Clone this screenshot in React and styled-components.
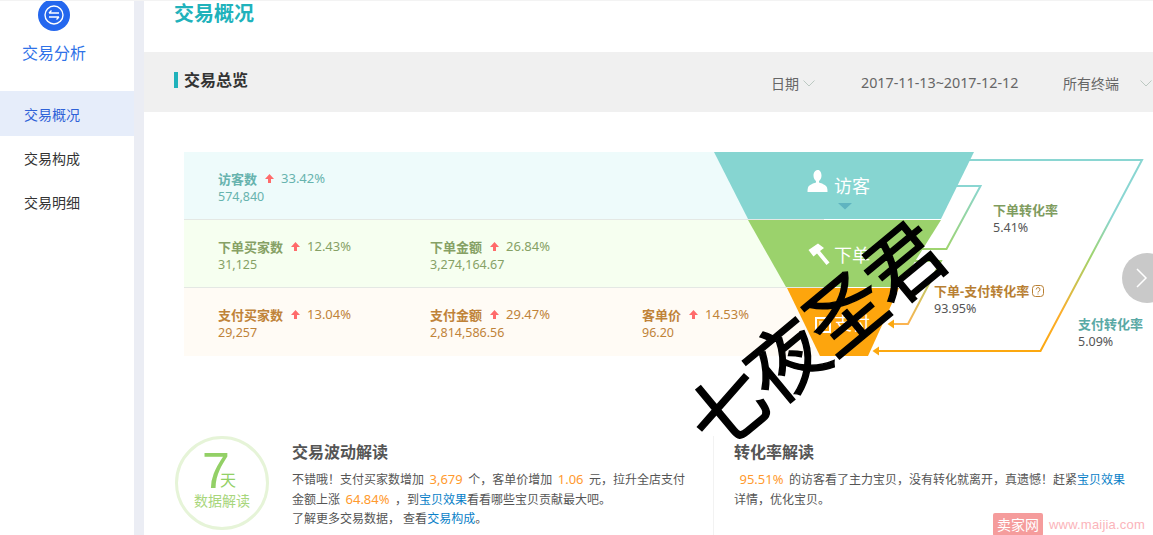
import React from 'react';
import styled, { createGlobalStyle } from 'styled-components';

const Global = createGlobalStyle`
  html, body { margin: 0; padding: 0; background: #fff; }
  body { width: 1153px; height: 535px; overflow: hidden; font-family: "Noto Sans", "Noto Sans CJK SC", sans-serif; }
  * { box-sizing: border-box; }
`;

const Page = styled.div`
  position: relative; display: flex; width: 1153px; height: 535px; overflow: hidden;
  border-top: 1px solid #f3f3f3; background: #fff;
`;
const Sidebar = styled.aside`
  width: 134px; flex: none; display: flex; flex-direction: column; background: #fff;
`;
const LogoWrap = styled.div`
  margin: -2px 0 0 38px; height: 32px; width: 32px;
`;
const SideTitle = styled.div`
  margin-top: 11px; width: 108px; text-align: center; font-size: 16px; line-height: 22px; color: #2f72e8;
`;
const Nav = styled.nav`
  margin-top: 27px; display: flex; flex-direction: column;
`;
const NavItem = styled.div`
  height: ${p => (p.$active ? 45 : 44)}px; padding-left: 24px; display: flex; align-items: center;
  font-size: 14px; color: ${p => (p.$active ? '#2f62d8' : '#333')};
  background: ${p => (p.$active ? '#e6edfa' : 'transparent')};
`;
const Gutter = styled.div`
  width: 10px; flex: none; background: #ebedf4;
`;
const Main = styled.main`
  flex: 1; min-width: 0; background: #fff;
`;
const PageTitle = styled.h1`
  margin: 0; height: 51px; padding: 0 0 0 30px; font-size: 20px; line-height: 26px; font-weight: 700; color: #20b2bb;
`;
const HeaderBar = styled.div`
  height: 60px; background: #f0f0f0; display: flex; align-items: center; padding-left: 30px;
`;
const SectionTitle = styled.h2`
  margin: -4px 0 0; width: 597px; border-left: 4px solid #20b2bb; padding-left: 6px; height: 16px;
  font-size: 16px; line-height: 16px; font-weight: 700; color: #333;
`;
const FilterText = styled.span`
  font-size: 14px; color: #666; white-space: nowrap; margin-top: 2px;
`;
const DateText = styled(FilterText)`
  margin-left: 46px; width: 202px; font-size: 14.3px; margin-top: 0;
`;
const Caret = styled.svg`
  width: 12px; height: 7px; margin: 2px 0 0 ${p => p.$gap}px; flex: none;
`;
const Board = styled.section`
  position: relative; margin: 40px 0 0 40px; width: 969px; height: 204px;
`;
const Row = styled.div`
  width: 640px; height: 68px; display: flex; padding: 17px 0 0 34px;
  background: ${p => p.$bg}; color: ${p => p.$color};
  border-bottom: ${p => (p.$last ? 'none' : '1px solid #e4e8e4')};
`;
const Metric = styled.div`
  width: 212px; flex: none;
`;
const MetricHead = styled.div`
  display: flex; align-items: center; height: 18px; font-size: 13px; white-space: nowrap;
`;
const MetricLabel = styled.b`
  font-weight: 700;
`;
const Up = styled.svg`
  width: 9px; height: 9px; margin: 1px 7px 0 8px; flex: none;
`;
const MetricValue = styled.div`
  margin-top: 1px; font-size: 12.5px; line-height: 17px;
`;
const FunnelArt = styled.svg`
  position: absolute; left: 0; top: 0; overflow: visible;
`;
const StageName = styled.span`
  position: absolute; left: ${p => p.$x}px; top: ${p => p.$y}px;
  font-size: 18px; line-height: 24px; color: #fff;
`;
const Rate = styled.div`
  position: absolute; left: ${p => p.$x}px; top: ${p => p.$y}px; white-space: nowrap;
`;
const RateName = styled.b`
  display: flex; align-items: center; gap: 3px; font-size: 13px; line-height: 18px; font-weight: 700; color: ${p => p.$color};
`;
const RateValue = styled.div`
  font-size: 12.5px; line-height: 17px; color: #555;
`;
const NextButton = styled.div`
  position: absolute; left: 938px; top: 101px; width: 50px; height: 50px; border-radius: 50%;
  background: #c9c9c9; display: flex; align-items: center; padding-left: 14px;
`;
const Insights = styled.section`
  margin: 80px 0 0 31px; display: flex; height: 99px;
`;
const Badge = styled.div`
  width: 94px; height: 94px; flex: none; border: 3px solid #e6f4d8; border-radius: 50%;
  display: flex; flex-direction: column; align-items: center; color: #93d066;
`;
const BadgeTop = styled.div`
  display: flex; align-items: flex-end; height: 38px; margin-top: 12px;
`;
const Seven = styled.span`
  display: block; height: 38px; font-size: 50px; line-height: 40px; font-weight: 400; font-family: "Liberation Sans", sans-serif;
`;
const Day = styled.span`
  font-size: 16px; line-height: 18px; margin: 0 6px 0 -10px;
`;
const BadgeCaption = styled.div`
  margin-top: 3px; font-size: 14px; line-height: 18px; color: #a8d67c;
`;
const Reading = styled.div`
  width: 421px; margin-left: 23px; flex: none;
`;
const ConversionReading = styled.div`
  flex: 1; border-left: 1px solid #f2f2f2; padding: 0 20px 0 20px;
`;
const ReadingTitle = styled.h3`
  margin: 5px 0 7px; font-size: 16px; line-height: 22px; font-weight: 700; color: #555;
`;
const ReadingText = styled.p`
  margin: 0; font-size: 12px; line-height: 19.5px; color: #555;
`;
const Hi = styled.span`
  font-size: 13px; line-height: 1; color: #ff9a2e; margin: 0 5.5px;
`;
const TextLink = styled.span`
  color: #0a7fc8;
`;
const Brand = styled.div`
  position: absolute; left: 993px; top: 511px; height: 24px; display: flex; align-items: center; gap: 6px;
`;
const BrandTag = styled.span`
  width: 50px; height: 23px; border-radius: 2px; background: #f59c9c; color: #fff; font-size: 14px;
  display: flex; align-items: center; justify-content: center;
`;
const BrandUrl = styled.span`
  font-size: 13px; letter-spacing: 0.2px; color: #fbb4ba; font-family: "Liberation Sans", sans-serif;
`;
const Watermark = styled.div`
  position: absolute; left: 652px; top: 290px; width: 320px; line-height: 84px; height: 84px;
  font-size: 78px; color: #000; white-space: nowrap; letter-spacing: -2px; -webkit-text-stroke: 1.4px #000;
  font-family: "Noto Sans CJK SC", sans-serif; transform: rotate(-39.6deg); text-align: center;
`;

const ROWS = [
  { bg: '#eefbfb', color: '#67b3ae', items: [['访客数', '33.42%', '574,840']] },
  { bg: '#f6fff0', color: '#86a165', items: [['下单买家数', '12.43%', '31,125'], ['下单金额', '26.84%', '3,274,164.67']] },
  { bg: '#fffbf5', color: '#c08339', last: true, items: [['支付买家数', '13.04%', '29,257'], ['支付金额', '29.47%', '2,814,586.56'], ['客单价', '14.53%', '96.20']] },
];

const CARET = <path d="M.5.5 6 6l5.5-5.5" fill="none" stroke="#bcc9c2" />;

export default function App() {
  return (
    <Page>
      <Global />
      <Sidebar>
        <LogoWrap>
          <svg width="32" height="32" viewBox="0 0 32 32">
            <circle cx="16" cy="16" r="16" fill="#2467ee" />
            <circle cx="16" cy="16" r="9" fill="none" stroke="#fff" strokeWidth="1.4" />
            <path d="M11 14h10M13.5 11.5 11 14M21 18H11M18.5 20.500 21 18" fill="none" stroke="#fff" strokeWidth="1.4" />
          </svg>
        </LogoWrap>
        <SideTitle>交易分析</SideTitle>
        <Nav>
          <NavItem $active>交易概况</NavItem>
          <NavItem>交易构成</NavItem>
          <NavItem>交易明细</NavItem>
        </Nav>
      </Sidebar>
      <Gutter />
      <Main>
        <PageTitle>交易概况</PageTitle>
        <HeaderBar>
          <SectionTitle>交易总览</SectionTitle>
          <FilterText>日期</FilterText>
          <Caret viewBox="0 0 12 7" $gap={4}>{CARET}</Caret>
          <DateText>2017-11-13~2017-12-12</DateText>
          <FilterText>所有终端</FilterText>
          <Caret viewBox="0 0 12 7" $gap={21}>{CARET}</Caret>
        </HeaderBar>
        <Board>
          {ROWS.map((r, i) => (
            <Row key={i} $bg={r.bg} $color={r.color} $last={r.last}>
              {r.items.map(([label, pct, value]) => (
                <Metric key={label}>
                  <MetricHead>
                    <MetricLabel>{label}</MetricLabel>
                    <Up viewBox="0 0 9 9"><path d="M4.500 0 9 5H6v4H3V5H0z" fill="#ff6b6b" /></Up>
                    <span>{pct}</span>
                  </MetricHead>
                  <MetricValue>{value}</MetricValue>
                </Metric>
              ))}
            </Row>
          ))}
          <FunnelArt width="969" height="204" viewBox="184 152 969 204">
            <defs>
              <linearGradient id="flow" gradientUnits="userSpaceOnUse" x1="0" y1="160" x2="0" y2="351">
                <stop offset="0" stopColor="#8ad6d2" />
                <stop offset="0.3" stopColor="#8ad6d2" />
                <stop offset="0.5" stopColor="#9fd46f" />
                <stop offset="0.8" stopColor="#fcae2c" />
                <stop offset="1" stopColor="#fca80f" />
              </linearGradient>
              <linearGradient id="flowShort" gradientUnits="userSpaceOnUse" x1="0" y1="186" x2="0" y2="249">
                <stop offset="0" stopColor="#8ad6d2" />
                <stop offset="1" stopColor="#9fd46f" />
              </linearGradient>
              <linearGradient id="flowPay" gradientUnits="userSpaceOnUse" x1="0" y1="261" x2="0" y2="324">
                <stop offset="0" stopColor="#9fd46f" />
                <stop offset="1" stopColor="#fbb451" />
              </linearGradient>
            </defs>
            <path d="M960 160H1142L1040.500 351H878" fill="none" stroke="url(#flow)" strokeWidth="2" />
            <path d="M872.500 351 879 346.500V355.500Z" fill="#fca80f" />
            <path d="M950 186H980.500L946.500 249H915" fill="none" stroke="url(#flowShort)" strokeWidth="2" />
            <path d="M915 261H941L908 324H892" fill="none" stroke="url(#flowPay)" strokeWidth="2" />
            <path d="M887.500 324 894 319.500V328.500Z" fill="#fca80f" />
            <polygon points="714,152 974,152 941,219 748,219" fill="#86d5d1" />
            <polygon points="748,220 941,220 899,287 786,287" fill="#9bd26c" />
            <polygon points="787,288 899,288 868,356 820,356" fill="#fda50d" />
            <path d="M838 203h14l-7 6.500z" fill="#5fb4c0" />
            <path d="M818 170c-3 0-4.500 2.500-4.500 5.500 0 2.500 1 4.500 2.500 5.500v1.500c-3 1-7 2.500-8 5-.5 1.500-.5 3-.5 4.500h20c0-1.500 0-3-.5-4.500-1-2.500-5-4-8-5V181c1.500-1 2.500-3 2.500-5.500 0-3-1.500-5.500-3.500-5.500z" fill="#fff" />
            <path d="M818 243.500 808.500 250l5 6.500 3.500-3 9.500 11.500 3-2.500-9.500-11.500 4-3z" fill="#fff" />
            <path d="M816 318h14v14h-14z" fill="none" stroke="#fff" strokeWidth="2" />
            <path d="M819 321h8v8h-8z" fill="#fff" opacity=".55" />
          </FunnelArt>
          <StageName $x={650} $y={22}>访客</StageName>
          <StageName $x={650} $y={91}>下单</StageName>
          <StageName $x={650} $y={159}>支付</StageName>
          <Rate $x={809} $y={49}>
            <RateName $color="#7f9c5f">下单转化率</RateName>
            <RateValue>5.41%</RateValue>
          </Rate>
          <Rate $x={750} $y={130}>
            <RateName $color="#b87f33">
              下单-支付转化率
              <svg width="12" height="12" viewBox="0 0 12 12"><rect x=".5" y=".5" width="11" height="11" rx="3" fill="none" stroke="#b87f33" /><path d="M4.200 4.500a1.900 1.900 0 1 1 2.700 1.700c-.6.300-.9.700-.9 1.300M6 8.500v1" fill="none" stroke="#b87f33" /></svg>
            </RateName>
            <RateValue>93.95%</RateValue>
          </Rate>
          <Rate $x={894} $y={163}>
            <RateName $color="#5aa9a5">支付转化率</RateName>
            <RateValue>5.09%</RateValue>
          </Rate>
          <NextButton>
            <svg width="12" height="20" viewBox="0 0 12 20"><path d="M1 1l9 9-9 9" fill="none" stroke="#fff" strokeWidth="1.500" /></svg>
          </NextButton>
        </Board>
        <Insights>
          <Badge>
            <BadgeTop>
              <Seven>7</Seven>
              <Day>天</Day>
            </BadgeTop>
            <BadgeCaption>数据解读</BadgeCaption>
          </Badge>
          <Reading>
            <ReadingTitle>交易波动解读</ReadingTitle>
            <ReadingText>
              不错哦！支付买家数增加<Hi>3,679</Hi>个，客单价增加<Hi>1.06</Hi>元，拉升全店支付<br />
              金额上涨<Hi>64.84%</Hi>，到<TextLink>宝贝效果</TextLink>看看哪些宝贝贡献最大吧。<br />
              了解更多交易数据， 查看<TextLink>交易构成</TextLink>。
            </ReadingText>
          </Reading>
          <ConversionReading>
            <ReadingTitle>转化率解读</ReadingTitle>
            <ReadingText>
              <Hi>95.51%</Hi>的访客看了主力宝贝，没有转化就离开，真遗憾！赶紧<TextLink>宝贝效果</TextLink><br />
              详情，优化宝贝。
            </ReadingText>
          </ConversionReading>
        </Insights>
      </Main>
      <Watermark>七夜圣君</Watermark>
      <Brand>
        <BrandTag>卖家网</BrandTag>
        <BrandUrl>www.maijia.com</BrandUrl>
      </Brand>
    </Page>
  );
}
